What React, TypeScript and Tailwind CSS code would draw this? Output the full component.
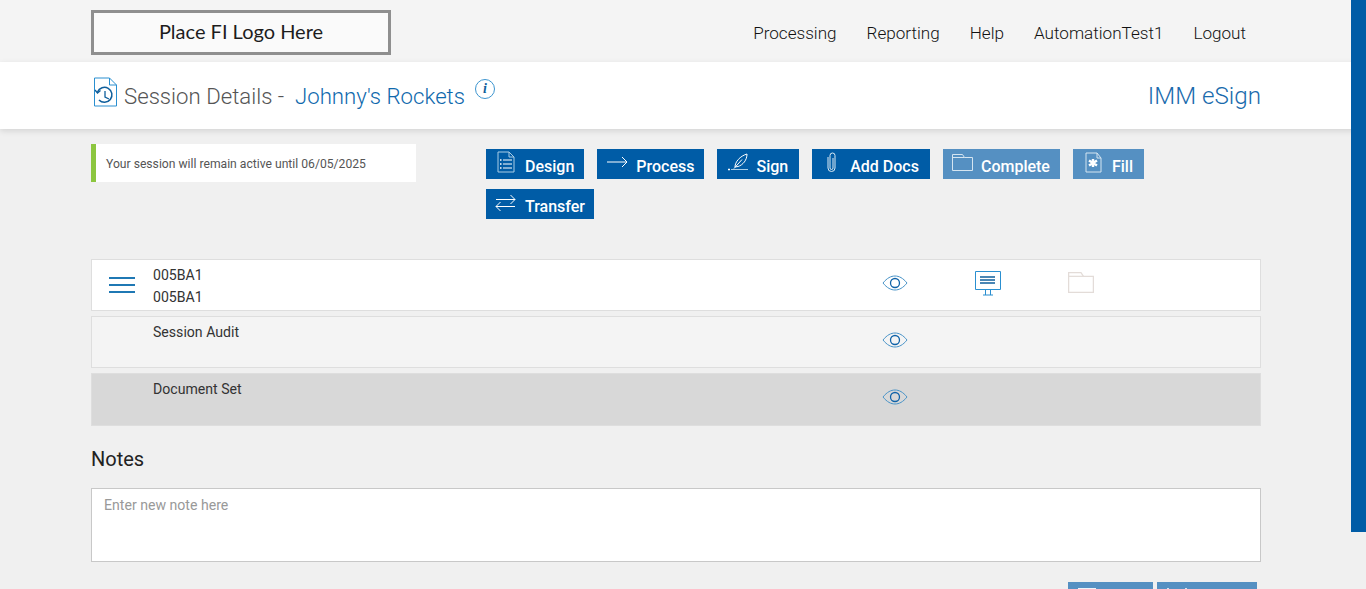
import React from "react";

const Eye = () => (
  <svg width="26" height="16" viewBox="0 0 26 16" fill="none" stroke="#0f62a8" strokeWidth="1">
    <path d="M1 8C5 3 9 1 13 1s8 2 12 7c-4 5-8 7-12 7S5 13 1 8z" stroke="#4a94c8" />
    <circle cx="13" cy="8" r="4.500" strokeWidth="1.3" />
  </svg>
);

const DesignIcon = () => (
  <svg width="18" height="22" viewBox="0 0 18 22" fill="none" stroke="#fff" strokeWidth="1">
    <path d="M1 1h11l5 5v15H1z" stroke="#a9cde6" />
    <path d="M12 1v5h5" stroke="#a9cde6" />
    <path d="M6 9h9M6 13h9M6 17h9" />
    <path d="M3 9h1.500M3 13h1.500M3 17h1.500" strokeWidth="1.500" />
  </svg>
);

const ArrowIcon = () => (
  <svg width="21" height="12" viewBox="0 0 21 12" fill="none" stroke="#fff" strokeWidth="1">
    <path d="M0 6h20M15 1l5 5-5 5" />
  </svg>
);

const SignIcon = () => (
  <svg width="22" height="18" viewBox="0 0 22 18" fill="none" stroke="#fff" strokeWidth="1">
    <path d="M4 16.500h17" stroke="#a9cde6" />
    <path d="M1 16.500h2" strokeWidth="1.500" />
    <path d="M8 14c0-5 5-11 12-13 0 6-4 11-9 12.500z" />
    <path d="M7 15.500l8-9" />
  </svg>
);

const ClipIcon = () => (
  <svg width="9" height="21" viewBox="0 0 9 21" fill="none" stroke="#fff" strokeWidth="1">
    <path d="M6 6v10a1.500 1.500 0 0 1-3 0V3.500a2.500 2.500 0 0 1 5 0V16a3.500 3.500 0 0 1-7 0V5" stroke="#dcebf5" />
  </svg>
);

const FolderIcon = ({ color = "#d5e5f1", w = 21, h = 17 }: { color?: string; w?: number; h?: number }) => (
  <svg width={w} height={h} viewBox="0 0 21 17" fill="none" stroke={color} strokeWidth="1">
    <path d="M.5 16.500V.5h10l2 3h8v13z" />
    <path d="M.5 3.500h12" />
  </svg>
);

const FillIcon = () => (
  <svg width="17" height="21" viewBox="0 0 17 21" fill="none" stroke="#d5e5f1" strokeWidth="1">
    <path d="M1 1h11l4 5v14H1z" />
    <path d="M12 1v5h4" />
    <path d="M8 7v8M4 8.500l8 5M12 8.500l-8 5" strokeWidth="2.400" stroke="#fff" />
  </svg>
);

const TransferIcon = () => (
  <svg width="21" height="17" viewBox="0 0 21 17" fill="none" stroke="#fff" strokeWidth="1">
    <path d="M1 5.500h19M15.500 1l4.500 4.500-4.500 4.500" />
    <path d="M20 12.500H1M5.500 8L1 12.500 5.500 17" />
  </svg>
);

const ActionButton = ({
  icon,
  label,
  gap,
  pad,
  faded,
}: {
  icon: React.ReactNode;
  label: string;
  gap: string;
  pad: string;
  faded?: boolean;
}) => (
  <button
    className={`flex h-[30px] items-center text-white text-[16px] font-medium ${gap} ${pad} ${
      faded ? "bg-[#5590c2] text-[#eef4f9]" : "bg-[#005ca6]"
    }`}
  >
    <span className="-mt-1 flex">{icon}</span>
    <span className="mt-[5px]">{label}</span>
  </button>
);

const App: React.FC = () => {
  return (
    <div className="relative h-[589px] overflow-hidden bg-[#f0f0f0] font-['Roboto',sans-serif]">
      {/* Side band */}
      <div className="absolute right-0 top-0 h-[532px] w-[15px] bg-[#005ca6]" />

      {/* Top bar */}
      <div className="flex h-[62px] items-start justify-between bg-[#f4f4f4] pl-[91px] pr-[120px]">
        <div className="mt-[10px] flex h-[45px] w-[300px] items-center justify-center border-[3px] border-[#8f8f8f] bg-[#fafafa] pb-[4px] font-['Lato',sans-serif] text-[20px] font-normal text-[#1d1d1d]">
          Place FI Logo Here
        </div>
        <nav className="mt-[22px] flex gap-[30px] text-[17.1px] font-light leading-[22px] text-[#111]">
          <span>Processing</span>
          <span>Reporting</span>
          <span>Help</span>
          <span>AutomationTest1</span>
          <span>Logout</span>
        </nav>
      </div>

      {/* Title bar */}
      <div className="flex h-[67px] items-start justify-between bg-white pl-[91px] pr-[105px] shadow-[0_2px_6px_rgba(0,0,0,0.12)]">
        <div className="flex items-start">
          <svg className="ml-[2px] mt-[15px]" width="24" height="30" viewBox="0 0 24 30" fill="none" stroke="#2a8fd0" strokeWidth="1">
            <path d="M1.500 1h15l7 7v21h-22z" />
            <path d="M16.500 1v7h7" />
            <path d="M4.500 15a7.500 7.500 0 1 1 1.500 8" stroke="#0f5f9c" strokeWidth="1.500" />
            <path d="M2 13l2.500 3 3-2.500M12 14v6l4 2" stroke="#0f5f9c" strokeWidth="1.300" />
          </svg>
          <h1 className="ml-[7px] mt-[19px] text-[22.2px] font-light leading-[30px] text-[#555]">
            Session Details -&nbsp; <span className="text-[#0f69ad]">Johnny's Rockets</span>
          </h1>
          <span className="ml-[10px] mt-[17px] flex h-[20px] w-[20px] items-center justify-center rounded-full border border-[#3d95cf] font-['Liberation_Serif',serif] text-[14px] font-bold italic leading-none text-[#0f5f9c]">
            i
          </span>
        </div>
        <div className="mt-[18px] text-[24.2px] font-light leading-[32px] text-[#1a6bad]">IMM eSign</div>
      </div>

      <div className="ml-[91px] w-[1170px]">
        {/* Notice and actions */}
        <div className="flex items-start">
          <div className="mt-[15px] flex h-[38px] w-[325px] items-center border-l-[5px] border-[#8cc63f] bg-white pl-[10px] pt-[2px] text-[12.15px] text-[#555]">
            Your session will remain active until 06/05/2025
          </div>
          <div className="ml-[70px] mt-[20px] flex w-[700px] flex-wrap gap-x-[13px] gap-y-[10px]">
            <ActionButton icon={<DesignIcon />} label="Design" gap="gap-[10px]" pad="pl-[11px] pr-[10px]" />
            <ActionButton icon={<ArrowIcon />} label="Process" gap="gap-[8px]" pad="pl-[10px] pr-[10px]" />
            <ActionButton icon={<SignIcon />} label="Sign" gap="gap-[7px]" pad="pl-[10px] pr-[11px]" />
            <ActionButton icon={<ClipIcon />} label="Add Docs" gap="gap-[14px]" pad="pl-[15px] pr-[11px]" />
            <ActionButton icon={<FolderIcon />} label="Complete" gap="gap-[8px]" pad="pl-[9px] pr-[10px]" faded />
            <ActionButton icon={<FillIcon />} label="Fill" gap="gap-[10px]" pad="pl-[12px] pr-[11px]" faded />
            <ActionButton icon={<TransferIcon />} label="Transfer" gap="gap-[9px]" pad="pl-[9px] pr-[9px]" />
          </div>
        </div>

        {/* Rows */}
        <div className="mt-[40px] flex flex-col gap-[5px] text-[14.1px] text-[#333]">
          <div className="relative h-[52px] border border-[#dedede] bg-white pl-[61px] pt-[4px] leading-[22px]">
            <div className="absolute left-[17px] top-[17px] flex w-[26px] flex-col gap-[5px]">
              <div className="h-[2px] bg-[#1f78b4]" />
              <div className="h-[2px] bg-[#1f78b4]" />
              <div className="h-[2px] bg-[#1f78b4]" />
            </div>
            <div>005BA1</div>
            <div>005BA1</div>
            <div className="absolute left-[790px] top-[15px]">
              <Eye />
            </div>
            <svg className="absolute left-[883px] top-[11px]" width="26" height="25" viewBox="0 0 26 25" fill="none" stroke="#2a8fd0">
              <path d="M.5.500h25v18H.5z" />
              <path d="M5 6h15M5 9h15M5 12h15" stroke="#0f5f9c" strokeWidth="1.400" />
              <path d="M10.500 19v5M15.500 19v5M8 24h10" />
            </svg>
            <div className="absolute left-[976px] top-[12px]">
              <FolderIcon color="#e3dcd8" w={26} h={21} />
            </div>
          </div>
          <div className="relative h-[52px] border border-[#dedede] bg-[#f4f4f4] pl-[61px] pt-[6px] leading-[18px]">
            Session Audit
            <div className="absolute left-[790px] top-[15px]">
              <Eye />
            </div>
          </div>
          <div className="relative h-[53px] border border-[#dedede] bg-[#d8d8d8] pl-[61px] pt-[6px] leading-[18px]">
            Document Set
            <div className="absolute left-[790px] top-[15px]">
              <Eye />
            </div>
          </div>
        </div>

        {/* Notes */}
        <h2 className="mt-[21px] text-[20px] font-normal leading-[24px] text-[#222]">Notes</h2>
        <textarea
          className="mt-[17px] block h-[74px] w-full resize-none border border-[#c8c8c8] bg-white px-3 py-[7px] text-[14.1px] leading-[18px] outline-none placeholder:text-[#999]"
          placeholder="Enter new note here"
        />
        {/* Bottom buttons, cut off by the window */}
        <div className="mt-[20px] flex justify-end gap-[4px] pr-[4px]">
          <div className="h-[30px] w-[85px] bg-[#5590c2] pl-[10px] pt-[6px]">
            <div className="h-[16px] w-[18px] border border-[#eef4f9]" />
          </div>
          <div className="h-[30px] w-[100px] bg-[#5590c2] pl-[10px] pt-[6px]">
            <div className="flex w-[20px] justify-between">
              <div className="h-[16px] w-[2px] bg-[#d5e5f1]" />
              <div className="h-[16px] w-[2px] bg-[#d5e5f1]" />
            </div>
          </div>
        </div>
      </div>
    </div>
  );
};

export default App;
